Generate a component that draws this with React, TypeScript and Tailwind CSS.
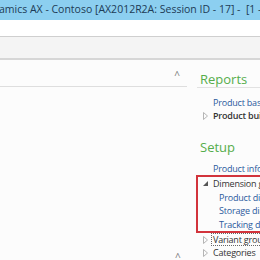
const font = { fontFamily: '"Open Sans", "Liberation Sans", sans-serif' };

function Arrow({ open }: { open?: boolean }) {
  return open ? (
    <svg width="5" height="5" viewBox="0 0 5 5" className="shrink-0">
      <path d="M5 0 L5 5 L0 5 Z" fill="#555" />
    </svg>
  ) : (
    <svg width="5" height="8" viewBox="0 0 5 8" className="shrink-0">
      <path d="M0.5 0.5 L4.5 4 L0.5 7.5 Z" fill="none" stroke="#b5b5b5" />
    </svg>
  );
}

function Row({
  label,
  bold,
  arrow,
  open,
  indent,
  dark,
  focus,
  h = "h-[13.5px]",
}: {
  label: string;
  bold?: boolean;
  arrow?: boolean;
  open?: boolean;
  indent?: boolean;
  dark?: boolean;
  focus?: boolean;
  h?: string;
}) {
  return (
    <div className={"flex items-center whitespace-nowrap " + h}>
      <div className="flex w-[16px] shrink-0 items-center justify-start pl-[6px]">
        {arrow && <Arrow open={open} />}
      </div>
      <span
        className={
          "text-[9px] leading-[11px] tracking-[-0.2px] " +
          (indent ? "pl-[6px] " : "") +
          (bold ? "font-semibold " : "") +
          (dark ? "text-[#333] " : "text-[#2b5a9c] ") +
          (focus ? "border border-dotted border-[#666] px-[1px] -ml-[2px]" : "")
        }
      >
        {label}
      </span>
    </div>
  );
}

export default function App() {
  return (
    <div className="h-[260px] w-[260px] overflow-hidden bg-[#fcfcfc]" style={font}>
      {/* title bar */}
      <div className="flex h-[20px] items-center whitespace-nowrap bg-[#8ccff0] text-[10.5px] text-[#1d3b55]">
        <span className="-ml-[1px]">amics AX - Contoso [AX2012R2A: Session ID - 17] -&nbsp; [1 -</span>
      </div>
      <div className="h-[17px] border-b border-[#cfcfcf] bg-white" />
      <div className="h-[23px] border-b-2 border-[#d6d6d6] bg-[#f4f4f4]" />

      <div className="flex">
        {/* left pane */}
        <div className="relative h-[200px] w-[190px] shrink-0">
          <div className="mr-[3px] flex h-[27px] items-end justify-end border-b border-[#dedede] pb-[6px] pr-[7px]">
            <span className="text-[10px] leading-[10px] text-[#777]">^</span>
          </div>
          <span className="absolute left-[175px] top-[192px] text-[10px] leading-[10px] text-[#777]">^</span>
        </div>

        {/* right pane */}
        <div className="flex-1 pl-[7px]">
          <div className="h-[28px] whitespace-nowrap border-b border-[#e2e2e2] pl-[3px] pt-[11px] text-[13px] leading-[16px] text-[#55ad4b]">
            Reports
          </div>
          <div className="pt-[8px]">
            <Row label="Product base" h="h-[13px]" />
            <Row label="Product builder" arrow bold dark h="h-[13px]" />
          </div>
          <div className="whitespace-nowrap pl-[3px] pt-[17px] text-[13px] leading-[16px] text-[#55ad4b]">
            Setup
          </div>
          <div className="pt-[6px]">
            <Row label="Product information" h="h-[14px]" />
            <div className="-ml-[1px] border-2 border-r-0 border-[#d2343c]">
              <div className="-ml-[1px]">
                <Row label="Dimension groups" arrow open dark />
                <Row label="Product dimension groups" indent />
                <Row label="Storage dimension groups" indent />
                <Row label="Tracking dimension groups" indent />
              </div>
            </div>
            <Row label="Variant groups" arrow dark focus h="h-[13px]" />
            <Row label="Categories" arrow dark h="h-[13px]" />
          </div>
        </div>
      </div>
    </div>
  );
}
